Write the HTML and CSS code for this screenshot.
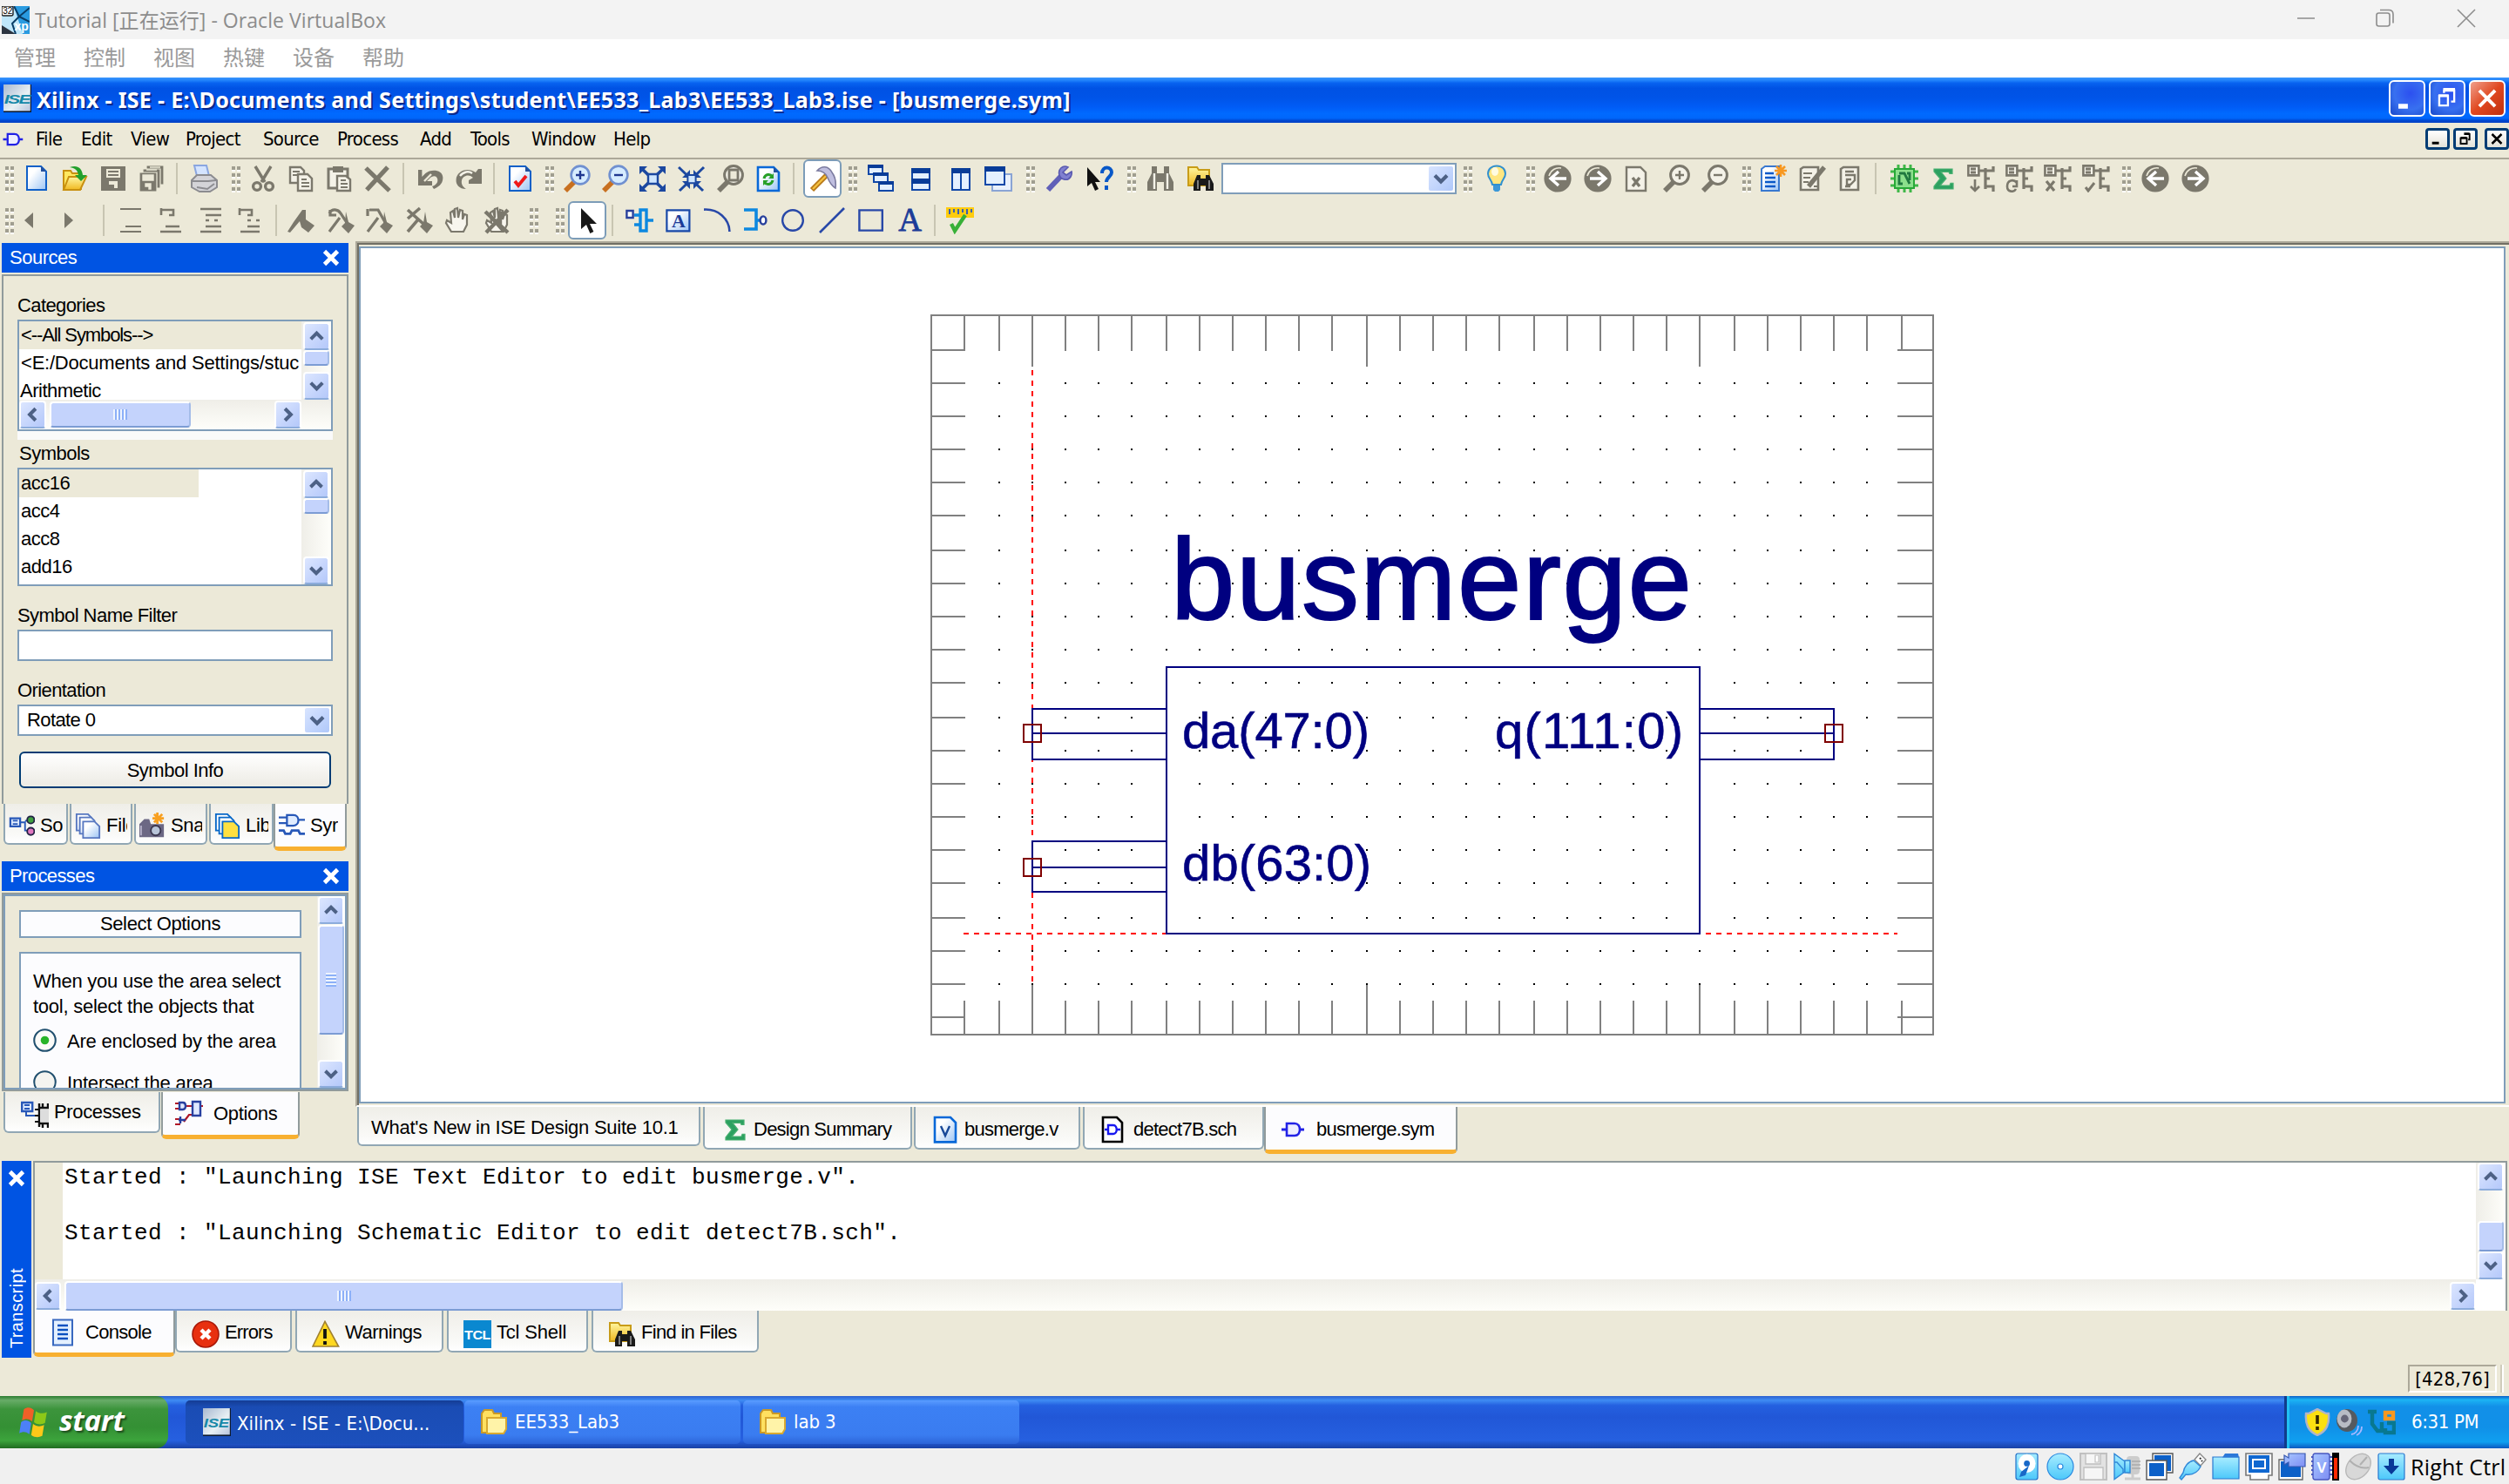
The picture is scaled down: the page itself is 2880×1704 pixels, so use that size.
FILE: index.html
```html
<!DOCTYPE html>
<html lang="zh-CN">
<head>
<meta charset="utf-8">
<title>Tutorial [正在运行] - Oracle VirtualBox</title>
<link rel="stylesheet" href="styles.css">
</head>
<body>
<svg class="defs" aria-hidden="true">
<defs>
<linearGradient id="gDoc" x1="0" y1="0" x2="1" y2="1"><stop offset=".3" stop-color="#fff"/><stop offset="1" stop-color="#9cc4f4"/></linearGradient>
<linearGradient id="gFold" x1="0" y1="0" x2="0" y2="1"><stop offset="0" stop-color="#fff6a0"/><stop offset="1" stop-color="#f0b820"/></linearGradient>
<linearGradient id="gCy" x1="0" y1="0" x2="0" y2="1"><stop offset="0" stop-color="#a8ecff"/><stop offset="1" stop-color="#4cc8fa"/></linearGradient>
<linearGradient id="gVi" x1="0" y1="0" x2="1" y2="1"><stop offset="0" stop-color="#a9c8ff"/><stop offset="1" stop-color="#7d8df4"/></linearGradient>
<linearGradient id="gIse" x1="0" y1="0" x2="1" y2="1"><stop offset="0" stop-color="#a8b8d0"/><stop offset=".6" stop-color="#e8f0f4"/><stop offset="1" stop-color="#b8c4dc"/></linearGradient>
<symbol id="up" viewBox="0 0 16 16"><path d="M4 10l4-4 4 4" fill="none" stroke="#4d6185" stroke-width="2.4"/></symbol>
<symbol id="dn" viewBox="0 0 16 16"><path d="M4 6l4 4 4-4" fill="none" stroke="#4d6185" stroke-width="2.4"/></symbol>
<symbol id="lf" viewBox="0 0 16 16"><path d="M10 4L6 8l4 4" fill="none" stroke="#4d6185" stroke-width="2.4"/></symbol>
<symbol id="rt" viewBox="0 0 16 16"><path d="M6 4l4 4-4 4" fill="none" stroke="#4d6185" stroke-width="2.4"/></symbol>
<symbol id="close" viewBox="0 0 8 8"><path d="M1 1l6 6M7 1L1 7" fill="none" stroke="#fff" stroke-width="1.9"/></symbol>
<symbol id="vm" viewBox="0 0 16 16"><path d="M0 0h16v16H0z" fill="#2a9be0"/><path d="M0 0h7l5 16H0z" fill="#bfe6fa"/><path d="M0 11l8 5H0z" fill="#2c3440"/><path d="M7 0l3 6 6-5M10 6L6 10l2 6M10 6l6 3" stroke="#0a3d66" fill="none"/><rect width="6.5" height="5.5" rx="1" fill="#fff" stroke="#222" stroke-width=".7"/><text x=".6" y="4.6" font-size="5" font-family="Liberation Sans" fill="#000">32</text><text x="7.2" y="14" font-size="7" font-weight="700" font-family="Liberation Sans" fill="#fff">xp</text></symbol>
<symbol id="ise" viewBox="0 0 16 16"><path d="M0 0h16v16H0z" fill="#0c1a30"/><path d="M0 0h15.4v15.2H0z" fill="url(#gIse)"/><text x=".4" y="11" font-size="7.4" textLength="14.6" lengthAdjust="spacingAndGlyphs" font-style="italic" font-weight="700" font-family="Liberation Sans" fill="#1688a8">ISE</text></symbol>
<symbol id="gate" viewBox="0 0 16 16"><path d="M5 4.5h4.5c2 0 3 1.6 3 3.500s-1 3.500-3 3.500H5z" fill="#eef" stroke="#2222e6" stroke-width="1.300"/><path d="M2 8h2.500M13 8h2" stroke="#2222e6" stroke-width="1.400"/></symbol>
<symbol id="new" viewBox="0 0 16 16"><path d="M2.500 1h8l3 3v10.500h-11z" fill="url(#gDoc)" stroke="#1060c8"/><path d="M10.500 1l3 3h-3z" fill="#24509c"/></symbol>
<symbol id="open" viewBox="0 0 16 16"><path d="M1.500 3.500h4l1 1.500h5v9h-10z" fill="#ffe860" stroke="#c89010"/><path d="M1.500 14.500l3-7.500h10l-3.500 7.500z" fill="url(#gFold)" stroke="#c89010"/><path d="M5 1.500c4-1.500 7 0 7.500 4.500h2.500l-3.500 3.500L8 6h2C9.500 3 8 2 5 1.500z" fill="#22a02c"/></symbol>
<symbol id="save" viewBox="0 0 16 16"><path d="M1 1h14v14H1z" fill="#7b786c"/><path d="M4 2.500h8v5H4zM5.500 9.500h5v4h-2v-2h-3z" fill="#ece9d8"/><path d="M5 4h6M5 6h6" stroke="#7b786c"/></symbol>
<symbol id="saveall" viewBox="0 0 16 16"><g fill="#7b786c" stroke="#ece9d8" stroke-width=".6"><path d="M5 .5h10v11H5z"/><path d="M3 2.500h10v11H3z"/><path d="M1 4.500h10v11H1z"/></g><path d="M3 6h6v3H3zM4.500 11h3v3h-1v-1.500h-2zM5 3h6M7 1.500h6" stroke="#ece9d8" stroke-width=".7" fill="#ece9d8"/></symbol>
<symbol id="print" viewBox="0 0 16 16"><path d="M2.500.5h7l1.500 6H4z" fill="#d4e4ff" stroke="#8aa6e0"/><path d="M1 9l3-3h8l3.500 3v4l-4 2.500h-6L1 13z" fill="#d4d4d8" stroke="#8c8c90"/><path d="M1.500 9.500h9l4.500-.5M4 13l6 1 4-3" stroke="#8c8c90" fill="none"/></symbol>
<symbol id="cut" viewBox="0 0 16 16"><g fill="none" stroke="#7b786c" stroke-width="1.700"><path d="M3.500 1l5.500 9M12.500 1L7 10"/><circle cx="4.500" cy="12.500" r="2.200"/><circle cx="11.500" cy="12.500" r="2.200"/></g></symbol>
<symbol id="copy" viewBox="0 0 16 16"><g fill="#f4f2e8" stroke="#7b786c" stroke-width="1.200"><path d="M1.500 1.500h6l2 2v7h-8z"/><path d="M6 5.500h5.500l2.500 2.500v7H6z"/></g><path d="M3 4h4M3 6h3M8 8.500h3M8 10.500h4.500M8 12.500h4.500" stroke="#7b786c"/></symbol>
<symbol id="paste" viewBox="0 0 16 16"><path d="M1.500 2.500h11v11h-11z" fill="#f4f2e8" stroke="#7b786c" stroke-width="1.500"/><path d="M4 1h6v3.500H4z" fill="#7b786c"/><path d="M6.500 6.500h5l2.500 2v6.500H6.500z" fill="#f4f2e8" stroke="#7b786c" stroke-width="1.200"/><path d="M8.500 9h3M8.500 11h4M8.500 13h4" stroke="#7b786c"/></symbol>
<symbol id="del" viewBox="0 0 16 16"><path d="M1 2l13.500 13M13.500 1.500L1.500 14.500" stroke="#7b786c" stroke-width="2.600" fill="none"/></symbol>
<symbol id="undo" viewBox="0 0 16 16"><path d="M1 3h2.200v4l2-2C8 2.500 15 2.500 15.200 7.500c0 4-3 5.500-5.200 6.500l-1-1.500c3-1 3.500-3 3-4.500-.8-2-3-1.500-4.500 0L6 9.500h3V12H1z" fill="#7b786c"/><path d="M4.500 9.500l4-4" stroke="#ece9d8" stroke-width="1.200"/></symbol>
<symbol id="redo" viewBox="0 0 16 16"><path d="M15.500 2.500V11H8V9l2.500-1.500C8 5 4.500 6.500 4 9s1 4 2.500 5C2.500 14 .5 11.500.8 8.500 1 4 7 1 12 4.500l1.500-2z" fill="#7b786c"/><path d="M3 6.500C5 4 8 3.500 10 5" stroke="#f4f2e8" stroke-width="1.200" fill="none"/></symbol>
<symbol id="chk" viewBox="0 0 16 16"><path d="M1.500 1h9l3 3v11h-12z" fill="url(#gDoc)" stroke="#1060c8"/><path d="M10.500 1l3 3h-3z" fill="#24509c"/><path d="M4.500 9.500l2 2.500L11 6.500" stroke="#f01818" stroke-width="1.900" fill="none"/></symbol>
<symbol id="mag" viewBox="0 0 16 16"><path d="M7 9.500L1.500 15" stroke="#c87020" stroke-width="2.800"/><circle cx="10" cy="6" r="5.200" fill="#d6ecff" stroke="#7090d0" stroke-width="1.300"/></symbol>
<symbol id="zin" viewBox="0 0 16 16"><use href="#mag"/><path d="M7.500 6h5M10 3.500v5" stroke="#203890" stroke-width="1.200"/></symbol>
<symbol id="zout" viewBox="0 0 16 16"><use href="#mag"/><path d="M7.500 6h5" stroke="#203890" stroke-width="1.200"/></symbol>
<symbol id="fit" viewBox="0 0 16 16"><path d="M1 2l13 12.500M14 2L1 14.500" stroke="#1c48a0" stroke-width="1.800"/><path d="M0 1h4.500L0 5.500zM15 1v4.500L10.500 1zM0 15.500V11l4.500 4.500zM15 15.500V11l-4.500 4.500z" fill="#1c48a0"/><path d="M5 5.500h5.500v5.500H5z" fill="#cfe6ff" stroke="#1c48a0" stroke-width="1.200"/></symbol>
<symbol id="shr" viewBox="0 0 16 16"><path d="M.5 1.500l14 13.500M15 1.500L1 15" stroke="#1c48a0" stroke-width="1.500"/><path d="M2.500 7.500h4.500V3zM9 3v4.500h4.500zM2.500 9.500h4.500V14zM9 14V9.500h4.500z" fill="#1c48a0"/><path d="M5.700 6h4.600v4.600H5.700z" fill="#cfe6ff" stroke="#1c48a0"/></symbol>
<symbol id="gmag" viewBox="0 0 16 16"><path d="M7 9.500L1.500 15" stroke="#7b786c" stroke-width="2.800"/><circle cx="10" cy="6" r="5.200" fill="#f4f2e8" stroke="#7b786c" stroke-width="1.500"/></symbol>
<symbol id="gsel" viewBox="0 0 16 16"><use href="#gmag"/><path d="M7.500 3h5v6h-5z" fill="#ece9d8" stroke="#7b786c" stroke-width="1.400"/></symbol>
<symbol id="gzin" viewBox="0 0 16 16"><use href="#gmag"/><path d="M7.500 6h5M10 3.500v5" stroke="#7b786c" stroke-width="1.200"/></symbol>
<symbol id="gzout" viewBox="0 0 16 16"><use href="#gmag"/><path d="M7.500 6h5" stroke="#7b786c" stroke-width="1.200"/></symbol>
<symbol id="ref" viewBox="0 0 16 16"><path d="M2 1.500h9l3 3v10.500H2z" fill="url(#gDoc)" stroke="#0868d8" stroke-width="1.300"/><path d="M11 1.500l3 3h-3z" fill="#24509c"/><path d="M5.500 8c.5-2.500 3.500-3 4.700-1.200M10.500 9c-.5 2.500-3.500 3-4.700 1.200" stroke="#28a028" stroke-width="1.500" fill="none"/><path d="M11 5v3H8zM5 12V9h3z" fill="#28a028"/></symbol>
<symbol id="ham" viewBox="0 0 16 16"><path d="M10 6L1.500 14.500" stroke="#b87818" stroke-width="3"/><path d="M9.500 6.500L2 14" stroke="#f4c040" stroke-width="1.200"/><path d="M4.500 3.500C7 .5 11 .5 13 4.500c1.500 2 2.500 5 2 9-2.500-1.500-3.500-3.500-4.500-6C9.500 5 7.500 3.500 4.500 3.500z" fill="#c0bfe0" stroke="#7c7ca0" stroke-width=".8"/></symbol>
<symbol id="w1" viewBox="0 0 16 16"><path d="M.5.500h8v5h-8z" fill="#e4f0ff" stroke="#1048a8"/><path d="M0 0h9v2H0z" fill="#083c98"/></symbol>
<symbol id="casc" viewBox="0 0 16 16"><use href="#w1" width="16" height="16" x="1" y="0"/><use href="#w1" width="16" height="16" x="4" y="4.500"/><use href="#w1" width="16" height="16" x="7" y="9.500"/></symbol>
<symbol id="th" viewBox="0 0 16 16"><path d="M3.500 2.500h10v12h-10z" fill="#e4f0ff" stroke="#1048a8"/><path d="M3 2h11v3H3zM3 8h11v3H3z" fill="#083c98"/></symbol>
<symbol id="tv" viewBox="0 0 16 16"><path d="M3.500 2.500h10v12h-10zM8.500 2v12" fill="#e4f0ff" stroke="#1048a8"/><path d="M3 2h11v3H3z" fill="#083c98"/></symbol>
<symbol id="win" viewBox="0 0 16 16"><path d="M4.500 5.500h11v9.500h-11z" fill="#e8f0fc" stroke="#8aa4d4"/><path d="M.5 1.500h11v10H.5z" fill="#e4f0ff" stroke="#1048a8"/><path d="M0 1h12v3H0z" fill="#083c98"/></symbol>
<symbol id="wr" viewBox="0 0 16 16"><path d="M1.500 14.500l8-8.500" stroke="#6060b8" stroke-width="3"/><path d="M13 1.500c-3-1.500-6 1-5 4.500 1 3 5 3.500 6.500 1 .7-1.200.8-2 .5-3l-3 2-2-1.500z" fill="#8080d0" stroke="#5858b0" stroke-width=".8"/></symbol>
<symbol id="hlp" viewBox="0 0 16 16"><path d="M1 1.500v11l2.500-2 2 4.500 2-1-2-4h3z" fill="#111"/><path d="M9.500 5c0-4.500 5.500-4 5.500-.5 0 2.500-3 2.500-3 5.500M12 12v2.500" stroke="#0858c8" stroke-width="2" fill="none"/></symbol>
<symbol id="bin" viewBox="0 0 16 16"><path d="M3 1h3v4h4V1h3v4l2.500 5v5H10v-5H6v5H.5v-5L3 5z" fill="#7b786c"/><path d="M4.500 5v9M12 5v9" stroke="#f4f2e8" stroke-width="1.200"/></symbol>
<symbol id="fbin" viewBox="0 0 16 16"><path d="M1 1.500h5l1 1.500h6v9H1z" fill="url(#gFold)" stroke="#c89c18"/><path d="M6 6h2v2h3V6h2l2.500 5v4H11v-3H8v3H4v-4z" fill="#1a1a1a"/><path d="M6.500 9v5M13 9v5" stroke="#999" stroke-width=".8"/></symbol>
<symbol id="bulb" viewBox="0 0 16 16"><path d="M8 .7c3 0 5 2 5 4.600 0 2.500-2 3.200-2.500 6.200h-5C5 8.500 3 7.800 3 5.300 3 2.700 5 .7 8 .7z" fill="#ffe680" stroke="#3090d0"/><path d="M6 12h4v2.500l-1 1H7l-1-1z" fill="#3c98d8"/><ellipse cx="7" cy="4" rx="2" ry="2.500" fill="#fffbe0"/></symbol>
<symbol id="back" viewBox="0 0 16 16"><circle cx="8" cy="8" r="7.800" fill="#7b786c"/><path d="M3 6.500C4 3 7 1.500 10 2" stroke="#ece9d8" fill="none" stroke-width=".8"/><path d="M8.500 4L4 8l4.500 4M4.500 8H13" fill="none" stroke="#fff" stroke-width="1.700"/></symbol>
<symbol id="fwd" viewBox="0 0 16 16"><circle cx="8" cy="8" r="7.800" fill="#7b786c"/><path d="M2 6.500C3 3 6 1.500 9 2" stroke="#ece9d8" fill="none" stroke-width=".8"/><path d="M8 4l4.500 4L8 12M12 8H3.500" fill="none" stroke="#fff" stroke-width="1.700"/></symbol>
<symbol id="docx" viewBox="0 0 16 16"><path d="M2.500 1.500h8l3 3v10.500h-11z" fill="#f4f2e8" stroke="#7b786c" stroke-width="1.200"/><path d="M6 7.500l4 5M10 7.500l-4 5" stroke="#7b786c" stroke-width="1.700"/></symbol>
<symbol id="nsrc" viewBox="0 0 16 16"><path d="M1 2.500L3 1h8v14H1z" fill="url(#gDoc)" stroke="#3878d0"/><path d="M3 5h5M3 7.500h6M3 10h6M3 12.500h6" stroke="#0858c8" stroke-width="1.200"/><path d="M12 0v7M8.500 3.500h7M9.500 1l5 5M14.500 1l-5 5" stroke="#f89820" stroke-width="1.300"/></symbol>
<symbol id="edit" viewBox="0 0 16 16"><path d="M1.500 2.500L3 1.500h8.500v13h-10z" fill="#f4f2e8" stroke="#7b786c" stroke-width="1.300"/><path d="M3 5h5M3 7.500h4M3 10h3M9 12.500h2" stroke="#7b786c"/><path d="M15 1.500L6 12.500" stroke="#7b786c" stroke-width="2.600"/></symbol>
<symbol id="dq" viewBox="0 0 16 16"><path d="M2.500 2.500L4 1.500h8.500v13h-10z" fill="#f4f2e8" stroke="#7b786c" stroke-width="1.300"/><path d="M5 4h5M5 6h5.500v3L8 11.500H6V8.500h2.500M5 12.500h3" stroke="#7b786c" stroke-width="1.200" fill="none"/></symbol>
<symbol id="chip" viewBox="0 0 16 16"><path d="M4.500 0v16M8 0v16M11.500 0v16M0 4h16M0 8h16M0 12h16" stroke="#40b848" stroke-width="1.500"/><path d="M2.500 2.500h11v11h-11z" fill="#8ce08c" stroke="#28a838"/><path d="M5 5h3l3 6M5 6v5l2 0M9.500 5H11v4" stroke="#207840" stroke-width="1.400" fill="none"/></symbol>
<symbol id="sig" viewBox="0 0 16 16"><path d="M3 3.500V2.500h10.500v2.700H12l-.5-1H7l3 3.800-3.500 4H12l.5-1.300H14v3.300H3V12.500l3.500-4.500L3 4z" fill="#2ca060" stroke="#48b070" stroke-width=".6"/></symbol>
<symbol id="lad" viewBox="0 0 16 16"><path d="M.7.700h6v5.500h-6z" fill="#f4f2e8" stroke="#7b786c" stroke-width="1.300"/><path d="M2 2.500h3M2 4.500h3M7 3.500h3M10.500 2v12M10 3.500h5V1M10 8h3M10 12.500h5v3" stroke="#7b786c" stroke-width="1.600" fill="none"/></symbol>
<symbol id="la" viewBox="0 0 16 16"><use href="#lad"/><path d="M4.500 8.500V15M2 12.500l2.500 2.500L7 12.500" stroke="#7b786c" stroke-width="1.300" fill="none"/></symbol>
<symbol id="lb" viewBox="0 0 16 16"><use href="#lad"/><path d="M6.500 10.500C4.500 8 1 9 1 12.500s4 3.500 5 1.500M4 12.500h2.500V9" stroke="#7b786c" stroke-width="1.300" fill="none"/></symbol>
<symbol id="lc" viewBox="0 0 16 16"><use href="#lad"/><path d="M1.500 9.500l4.500 5.500M6 9.500L1.500 15" stroke="#7b786c" stroke-width="1.600"/></symbol>
<symbol id="ld" viewBox="0 0 16 16"><use href="#lad"/><path d="M2 13l1.500 2L7 10.500" stroke="#7b786c" stroke-width="1.500" fill="none"/></symbol>
<symbol id="al" viewBox="0 0 16 16"><path d="M10 3.500v9L5 8z" fill="#7b786c"/></symbol>
<symbol id="ar" viewBox="0 0 16 16"><path d="M5 3.500v9L10 8z" fill="#7b786c"/></symbol>
<symbol id="l1" viewBox="0 0 16 16"><path d="M2 1.500h12M5 11.500h9M2 14.500h12" stroke="#7b786c" stroke-width="1.100"/></symbol>
<symbol id="l2" viewBox="0 0 16 16"><path d="M2.500 1v4M2.500 2h7v3H7M5 11.500h8M2 14.500h12" stroke="#7b786c" stroke-width="1.300" fill="none"/></symbol>
<symbol id="l3" viewBox="0 0 16 16"><path d="M2 1.500h12M5 5h9M5 8h2M10 8h2M5 11.500h9M2 14.500h12" stroke="#7b786c" stroke-width="1.200"/></symbol>
<symbol id="l4" viewBox="0 0 16 16"><path d="M2.500 1v4M2.500 2h7v3H7M7 8h2M12 8h2M7 11.500h7M3 14.500h11" stroke="#7b786c" stroke-width="1.300" fill="none"/></symbol>
<symbol id="p1" viewBox="0 0 16 16"><path d="M0 14.500L3.500 9 8.500 2h2v5.500l5 3.500-3.500 4-4-3-1-3.500L1.500 15z" fill="#7b786c"/></symbol>
<symbol id="p2" viewBox="0 0 16 16"><path d="M1 4C2.500 1 6 1.500 7.500 4l4 6M5 5H1.500V2M1 14.500l6-8" stroke="#7b786c" stroke-width="1.600" fill="none"/><path d="M10.500 3l1.500 6 3.500 2-3.500 4.500-4-4 2-2z" fill="#7b786c"/></symbol>
<symbol id="p3" viewBox="0 0 16 16"><path d="M1 1.500v4M2 2h5l4.500 8M1 14.500l6-8" stroke="#7b786c" stroke-width="1.600" fill="none"/><path d="M10.500 3l1.500 6 3.500 2-3.500 4.500-4-4 2-2z" fill="#7b786c"/></symbol>
<symbol id="p4" viewBox="0 0 16 16"><path d="M1 2l9 8M8 1L1 7M1 14.500l6-7" stroke="#7b786c" stroke-width="1.800" fill="none"/><path d="M11 3l1 6 3.500 2-3.500 4.500-4-4 2-2z" fill="#7b786c"/></symbol>
<symbol id="hand" viewBox="0 0 16 16"><path d="M5 14.500L2 9.500 2.500 8 5 9.500 4.500 3.500 6 2.500l1 4V1.500l1.500-.5.5 5.500 1-4.500 1.500.5v5l1-3 1.500.5v5.500l-2 4z" fill="#f8f6ee" stroke="#7b786c" stroke-width="1.100"/></symbol>
<symbol id="hx" viewBox="0 0 16 16"><use href="#hand"/><path d="M1.500 3l13 12M14.500 2L2 15M4 5l8 9M10 3v8" stroke="#7b786c" stroke-width="2.200"/></symbol>
<symbol id="cur" viewBox="0 0 16 16"><path d="M4 1v12l3-2.500 2.200 5 2-1-2.200-4.500H13z" fill="#181818"/></symbol>
<symbol id="sym" viewBox="0 0 16 16"><path d="M.7 2.500h3.600v4H.7z" fill="#fff" stroke="#28409c" stroke-width="1.200"/><path d="M8.500 2h3.500v12H8.500zM5 5h3M5 10.500h3M12 8h4" fill="#ece9d8" stroke="#0c88e0" stroke-width="1.700"/></symbol>
<symbol id="abox" viewBox="0 0 16 16"><path d="M1.700 2.200h13v12h-13z" fill="url(#gDoc)" stroke="#1848a8" stroke-width="1.100"/><text x="8.200" y="12" text-anchor="middle" font-family="Liberation Serif" font-weight="700" font-size="11" fill="#1c3c98">A</text></symbol>
<symbol id="arc" viewBox="0 0 16 16"><path d="M0 1.800c8-.5 14.500 5 14.700 12.700" stroke="#2848a8" stroke-width="1.300" fill="none"/></symbol>
<symbol id="bus" viewBox="0 0 16 16"><path d="M1 2h7v11H1M8 8h3" stroke="#0c88e0" stroke-width="1.800" fill="none"/><ellipse cx="12" cy="8" rx="1.700" ry="2.300" fill="#fff" stroke="#28409c" stroke-width="1.200"/></symbol>
<symbol id="cir" viewBox="0 0 16 16"><circle cx="8" cy="8" r="5.900" fill="none" stroke="#2848a8" stroke-width="1.200"/></symbol>
<symbol id="lin" viewBox="0 0 16 16"><path d="M.5 15L14.500 1" stroke="#2848a8" stroke-width="1.300"/></symbol>
<symbol id="rec" viewBox="0 0 16 16"><path d="M1.200 2.200h13.200v11.600H1.200z" fill="none" stroke="#2848a8" stroke-width="1.200"/></symbol>
<symbol id="txa" viewBox="0 0 16 16"><text x="8" y="14" text-anchor="middle" font-family="Liberation Serif" font-size="18.500" fill="#1c3c98" stroke="#1c3c98" stroke-width=".4">A</text></symbol>
<symbol id="rul" viewBox="0 0 16 16"><path d="M0 .5h16v6H0z" fill="#ffcc10"/><path d="M2 1.500v3M4.500 1.500v2M7 1.500v3M9.500 1.500v2M12 1.500v3M14.500 1.500v2" stroke="#3c60b0"/><path d="M3 10l2 4 6-9" stroke="#38b038" stroke-width="2.200" fill="none"/></symbol>
<symbol id="so" viewBox="0 0 16 16"><path d="M1 3.500h6v5H1z" fill="#e0ecff" stroke="#2858b8" stroke-width="1.200"/><path d="M2.500 5h3M2.500 7h3M7 6h3v5h2M10 5h2" stroke="#2858b8" fill="none"/><circle cx="13.500" cy="4.500" r="2.200" fill="#40a040" stroke="#224"/><circle cx="13.500" cy="11.500" r="2.200" fill="#e078c0" stroke="#224"/></symbol>
<symbol id="fil" viewBox="0 0 16 16"><g fill="url(#gDoc)" stroke="#5878c0"><path d="M1 1h7l2 2v8H1z"/><path d="M3 3h7l2 2v8H3z"/><path d="M5 5.500h7l3 3v7H5z"/></g></symbol>
<symbol id="lib" viewBox="0 0 16 16"><g fill="#fff" stroke="#0868c8"><path d="M1 1h7l2 2v8H1z"/><path d="M3 3h7l2 2v8H3z"/><path d="M5 5.500h7l3 3v7H5z" fill="#ffe040"/></g></symbol>
<symbol id="sna" viewBox="0 0 16 16"><path d="M11 0v7M8 3.500h7M9 1l5 5M14 1L9 6" stroke="#f8a020" stroke-width="1.500"/><path d="M0 7l3-3h3l1 3h8v8H0z" fill="#6c6884"/><circle cx="10" cy="11" r="3" fill="#b8c4d8" stroke="#3c3850"/><path d="M1 8v6" stroke="#b8b4cc"/></symbol>
<symbol id="syr" viewBox="0 0 16 16"><path d="M0 3h5M0 6.500h5M5 1.500h4c4 0 4 6.500 0 6.500H5zM12 4.500h4" fill="#e0ecff" stroke="#2858b8" stroke-width="1.200"/><path d="M0 11h3l1 2h3l1-2h4l1 2h3" fill="none" stroke="#2858b8" stroke-width="1.500"/></symbol>
<symbol id="prc" viewBox="0 0 16 16"><path d="M.6 1h6v5h-6z" fill="#e0ecff" stroke="#2858b8" stroke-width="1.200"/><path d="M2 2.500h3M2 4.500h3M3 6v2.500h5" stroke="#2858b8" fill="none"/><path d="M8 5h2M8 8.500h2M8 12h2" stroke="#111"/><path d="M10.500 1.500v13.500M15.500 1.500v2.500h-5M15.500 15.500v-2.500h-5M12.500 1.500v2M12.500 15.500v-2" stroke="#111" stroke-width="1.200" fill="none"/><path d="M11 5h5v7h-5z" fill="#ddd"/></symbol>
<symbol id="opt" viewBox="0 0 16 16"><path d="M0 2h3M0 5h3M6 3.500h3.500M13 3.500h3M0 11h3M5 12.500l3-4h2M0 14h3" stroke="#b01828" stroke-width="1.100" fill="none"/><path d="M2.500 1.500h2c2 0 2 4 0 4h-2zM10 1h4.500v8H10zM3 9.500v4M2 11.500h4" fill="#e0e8ff" stroke="#2840a0" stroke-width="1.200"/></symbol>
<symbol id="vdoc" viewBox="0 0 16 16"><path d="M2 1h9l3 3v11.200H2z" fill="url(#gDoc)" stroke="#0868d8" stroke-width="1.300"/><path d="M5.500 6l2.500 5.500L10.500 6" stroke="#184898" fill="none" stroke-width="1.200"/></symbol>
<symbol id="sdoc" viewBox="0 0 16 16"><path d="M2.500 1h8l3 3v11h-11z" fill="#fff" stroke="#000" stroke-width="1.300"/><path d="M5.500 5.500h3c2.500 0 2.500 5 0 5h-3zM3.500 8h2M10.500 8h2" fill="none" stroke="#1818f0" stroke-width="1.200"/></symbol>
<symbol id="con" viewBox="0 0 16 16"><path d="M2.500.800h11v14.500h-11z" fill="#e4f0ff" stroke="#3868c0"/><path d="M5 4h6M5 6.500h6M5 9h6M5 11.500h6" stroke="#0850c0" stroke-width="1.200"/></symbol>
<symbol id="err" viewBox="0 0 16 16"><circle cx="8" cy="8" r="7.500" fill="#e83010" stroke="#a81808" stroke-width=".8"/><path d="M5.500 5.500l5 5M10.500 5.500l-5 5" stroke="#fff" stroke-width="2.200"/></symbol>
<symbol id="warn" viewBox="0 0 16 16"><path d="M7.500.7L15.300 15H.5z" fill="#ffd820" stroke="#a08030" stroke-width=".8"/><path d="M7.500 5v5.500M7.500 12v2" stroke="#111" stroke-width="1.900"/></symbol>
<symbol id="tcl" viewBox="0 0 16 16"><path d="M0 0h16v16H0z" fill="#0a88d0"/><text x=".5" y="11" font-size="7" textLength="15" lengthAdjust="spacingAndGlyphs" font-family="Liberation Sans" font-weight="700" fill="#fff">TCL</text></symbol>
<symbol id="fold" viewBox="0 0 16 16"><path d="M1 3l1.500-2H7l1 2h4v3L5 14H1z" fill="#ffe060" stroke="#c89828"/><path d="M4 14.500V5.500h11V12l-1.500 2.500z" fill="#fff3a8" stroke="#d8a830"/></symbol>
<symbol id="flag" viewBox="0 0 36 36"><path d="M7 4c4-3 8-2 11 1l-2 12c-4-3-7-3-11-1z" fill="#f06028"/><path d="M20 6c4 3 8 3 12 1l-2 12c-4 2-8 2-12-1z" fill="#8cc818"/><path d="M4 18c4-3 8-2 11 1l-2 12c-4-3-7-3-11-1z" fill="#4c80f8"/><path d="M17 20c4 3 8 3 12 1l-2 12c-4 2-8 2-12-1z" fill="#fcc818"/></symbol>
<symbol id="shield" viewBox="0 0 16 16"><path d="M8 .5l5 2.500h1.500c.5 6-1 10-6.500 12.500C2.500 13 1 9 1.500 3H3z" fill="#fce010" stroke="#b0b4c8" stroke-width="1.200"/><path d="M8 4v5M8 10.500v2" stroke="#332800" stroke-width="1.800"/></symbol>
<symbol id="spk" viewBox="0 0 16 16"><ellipse cx="6.500" cy="7" rx="6" ry="6.500" fill="#555a60"/><ellipse cx="5" cy="6" rx="4.200" ry="5.200" fill="#b8bcc4"/><circle cx="5.200" cy="6" r="2.200" fill="#667"/><path d="M9 15c2 0 4-2 4-5M12 15.500c2-1 3-3 3-5" stroke="#a8b8ff" stroke-width=".9" fill="none"/></symbol>
<symbol id="v2" viewBox="0 0 16 16"><path d="M0 2h5M2.500 2v7l3 4H8V8" stroke="#087890" stroke-width="2.200" fill="none"/><path d="M10 2.500h4.500V6H10z" fill="none" stroke="#f89820" stroke-width="2.200"/><path d="M16 8.500h-5M15 8.500v5.500h-5v-2.500" fill="none" stroke="#087890" stroke-width="2.200"/></symbol>
<symbol id="h1" viewBox="0 0 16 16"><rect x="1.500" y=".5" width="12.500" height="15" rx="1.200" fill="url(#gCy)" stroke="#2070c8" stroke-width=".6"/><ellipse cx="7.800" cy="6.200" rx="5" ry="5.300" fill="#fff"/><circle cx="7.800" cy="6.200" r="1.700" fill="#1868c8"/><path d="M9 7.500L7 13l-3.500 1 1-3z" fill="#1868c8"/></symbol>
<symbol id="h2" viewBox="0 0 16 16"><circle cx="8" cy="8" r="7.500" fill="url(#gCy)" stroke="#2888e0" stroke-width=".6"/><circle cx="8" cy="8" r="1.500" fill="#fff" stroke="#2888e0" stroke-width=".6"/></symbol>
<symbol id="h3" viewBox="0 0 16 16"><path d="M.5.500h15v15H.5z" fill="#e2e2e2" stroke="#c0c0c0"/><path d="M3.500.500h8.500v6H3.500zM2.500 8.500h11v7h-11z" fill="#f6f6f6" stroke="#c0c0c0" stroke-width=".7"/><path d="M9 1.500h2v4H9z" fill="#fff" stroke="#c0c0c0" stroke-width=".6"/></symbol>
<symbol id="h4" viewBox="0 0 16 16"><rect x="8" y="2" width="7.500" height="10.500" rx="2" fill="#ccc"/><path d="M11 5h5M11 7h5M11 9h5" stroke="#aaa" stroke-width=".7"/><path d="M7 15h9M11.500 12v3" stroke="#ccc" stroke-width="1.500"/><path d="M1 5.500h1.500L6 9.500V12M1 .700L7 5v6l-6 4.300z" fill="url(#gCy)" stroke="#3088d8" stroke-width=".7"/><path d="M7 4.500h3v7H7z" fill="url(#gCy)" stroke="#3088d8" stroke-width=".7"/></symbol>
<symbol id="h5" viewBox="0 0 16 16"><path d="M4 .500h11.500v11H4z" fill="#fff" stroke="#555" stroke-width=".7"/><path d="M5 1.500h9.500v9H5z" fill="#0c60c8"/><path d="M.5 4.500H12v11H.5z" fill="#fff" stroke="#555" stroke-width=".7"/><path d="M2 6h8.500v7.500H2z" fill="#0c60c8"/></symbol>
<symbol id="h6" viewBox="0 0 16 16"><path d="M9 4l3-3.500 3.500 3.500-3 3.500z" fill="#fff" stroke="#888" stroke-width=".7"/><path d="M8.500 4.500l4 3.500C11 11 8 13 4 12.500l-2.500 3-1-1 2-3C3 8 5.500 5 8.500 4.500z" fill="url(#gCy)" stroke="#3088d8" stroke-width=".7"/><path d="M12 3l.7.7M13 4.500l.5.5" stroke="#333"/></symbol>
<symbol id="h7" viewBox="0 0 16 16"><path d="M.5 2.500h15v12.500H.5z" fill="url(#gCy)" stroke="#2878d0" stroke-width=".6"/><path d="M6 2.800L7.500.500H15l.5 2.300z" fill="#2c78d8"/></symbol>
<symbol id="h8" viewBox="0 0 16 16"><path d="M.5.500h15v12.500h-2v2.500H3V13H.5z" fill="#fff" stroke="#777" stroke-width=".8"/><path d="M2 1.500h12v10H2z" fill="#1068d0"/><path d="M4.500 4h7v5h-7z" fill="none" stroke="#fff"/></symbol>
<symbol id="h9" viewBox="0 0 16 16"><path d="M.5 4h13.500v11.500H.5z" fill="#fff" stroke="#666" stroke-width=".7"/><path d="M1.500 5h11.500v9H1.500z" fill="#0c60c8"/><path d="M6 .5h9.500V8H6V5.500L3.500 7V1.500L6 3z" fill="url(#gVi)" stroke="#3858b0" stroke-width=".6"/></symbol>
<symbol id="h10" viewBox="0 0 16 16"><path d="M0 2.500h12M0 5h12M0 7.500h12M0 10h12M0 12.500h12" stroke="#4858c0" stroke-width=".9"/><rect x="1" y=".5" width="9.500" height="15" rx="1.200" fill="url(#gVi)" stroke="#4858c0" stroke-width=".7"/><text x="5.700" y="11.500" text-anchor="middle" font-size="8.500" font-weight="700" font-family="Liberation Sans" fill="#fff">V</text><path d="M12 0h4v16h-4z"/><path d="M13 3h2v12h-2z" fill="#ff2800"/></symbol>
<symbol id="h11" viewBox="0 0 16 16"><ellipse cx="8" cy="8" rx="6" ry="8.300" transform="rotate(42 8 8)" fill="#d8d8d8" stroke="#b8b8b8" stroke-width=".7"/><path d="M3 4.500c3 3 7 5 11 4M9 7l4-4.500" stroke="#b0b0b0" fill="none"/></symbol>
<symbol id="h12" viewBox="0 0 16 16"><rect x=".5" y=".5" width="15" height="15" rx="1" fill="url(#gCy)" stroke="#2878d0" stroke-width=".6"/><path d="M6.500 3.500h3v4h3L8 12.500 3.500 7.500h3z" fill="#083898"/></symbol>
</defs>
</svg>

<header class="host-title">
  <svg class="host-logo" preserveAspectRatio="none"><use href="#vm"/></svg>
  <span class="host-name">Tutorial [正在运行] - Oracle VirtualBox</span>
  <svg class="host-ctl" viewBox="0 0 210 24"><g fill="none" stroke="#8d8d8d" stroke-width="1.600"><path d="M0 12h20M184 2l20 20M204 2l-20 20"/><rect x="91" y="6" width="15" height="15" rx="2.500"/><path d="M95 2.500h10q5 0 5 5v10"/></g></svg>
</header>
<nav class="host-menu"><span>管理</span><span>控制</span><span>视图</span><span>热键</span><span>设备</span><span>帮助</span></nav>

<header class="xp-title">
  <svg class="ic"><use href="#ise"/></svg>
  <h1>Xilinx - ISE - E:\Documents and Settings\student\EE533_Lab3\EE533_Lab3.ise - [busmerge.sym]</h1>
  <div class="xp-ctl">
    <svg viewBox="0 0 21 21"><path d="M5 14h6v3H5z" fill="#fff"/></svg>
    <svg viewBox="0 0 21 21"><path d="M8.500 7V5.500h6.500v7h-2M8 4.500h7.500" stroke="#fff" stroke-width="1.300" fill="none"/><path d="M5.500 9h5.500v6H5.500zM5 8.500h6.500" stroke="#fff" stroke-width="1.300" fill="none"/></svg>
    <svg class="red" viewBox="0 0 21 21"><path d="M5.500 5.500l10 10M15.500 5.500l-10 10" stroke="#fff" stroke-width="2.200"/></svg>
  </div>
</header>

<nav class="menubar">
  <svg class="ic"><use href="#gate"/></svg>
  <div class="menus"><span>File</span><span>Edit</span><span>View</span><span>Project</span><span>Source</span><span>Process</span><span>Add</span><span>Tools</span><span>Window</span><span>Help</span></div>
  <div class="mdi-ctl">
    <svg viewBox="0 0 14 12"><path d="M3 8h5v2H3z"/></svg>
    <svg viewBox="0 0 14 12"><path d="M6 2.500h4v4H9M3.500 5.500h4.500v4H3.500zM6 2h4M3.500 5h4.500" stroke="#000" fill="none" stroke-width="1.200"/></svg>
    <svg viewBox="0 0 14 12"><path d="M3.500 2.500l7 7M10.500 2.500l-7 7" stroke="#000" stroke-width="1.600"/></svg>
  </div>
</nav>

<section class="tools">
  <div class="bar one">
    <i class="grip"></i><svg class="ic"><use href="#new"/></svg><svg class="ic"><use href="#open"/></svg><svg class="ic"><use href="#save"/></svg><svg class="ic"><use href="#saveall"/></svg><i class="sep"></i><svg class="ic"><use href="#print"/></svg>
    <i class="grip"></i><svg class="ic"><use href="#cut"/></svg><svg class="ic"><use href="#copy"/></svg><svg class="ic"><use href="#paste"/></svg><svg class="ic"><use href="#del"/></svg><i class="sep"></i><svg class="ic"><use href="#undo"/></svg><svg class="ic"><use href="#redo"/></svg><i class="sep"></i><svg class="ic"><use href="#chk"/></svg>
    <i class="grip"></i><svg class="ic"><use href="#zin"/></svg><svg class="ic"><use href="#zout"/></svg><svg class="ic"><use href="#fit"/></svg><svg class="ic"><use href="#shr"/></svg><svg class="ic"><use href="#gsel"/></svg><svg class="ic"><use href="#ref"/></svg><i class="sep"></i><span class="pressed"><svg class="ic"><use href="#ham"/></svg></span>
    <i class="grip"></i><svg class="ic"><use href="#casc"/></svg><svg class="ic"><use href="#th"/></svg><svg class="ic"><use href="#tv"/></svg><svg class="ic"><use href="#win"/></svg>
    <i class="grip"></i><svg class="ic"><use href="#wr"/></svg><svg class="ic"><use href="#hlp"/></svg>
    <i class="grip"></i><svg class="ic"><use href="#bin"/></svg><svg class="ic"><use href="#fbin"/></svg><span class="combo find"><svg class="drop"><use href="#dn"/></svg></span>
    <i class="grip"></i><svg class="ic"><use href="#bulb"/></svg>
    <i class="grip"></i><svg class="ic"><use href="#back"/></svg><svg class="ic"><use href="#fwd"/></svg><svg class="ic"><use href="#docx"/></svg><svg class="ic"><use href="#gzin"/></svg><svg class="ic"><use href="#gzout"/></svg>
    <i class="grip"></i><svg class="ic"><use href="#nsrc"/></svg><svg class="ic"><use href="#edit"/></svg><svg class="ic"><use href="#dq"/></svg><i class="sep"></i><svg class="ic"><use href="#chip"/></svg><svg class="ic"><use href="#sig"/></svg><svg class="ic"><use href="#la"/></svg><svg class="ic"><use href="#lb"/></svg><svg class="ic"><use href="#lc"/></svg><svg class="ic"><use href="#ld"/></svg>
    <i class="grip"></i><svg class="ic"><use href="#back"/></svg><svg class="ic"><use href="#fwd"/></svg>
  </div>
  <div class="bar two">
    <i class="grip"></i><svg class="ic"><use href="#al"/></svg><svg class="ic"><use href="#ar"/></svg><i class="sep"></i><svg class="ic"><use href="#l1"/></svg><svg class="ic"><use href="#l2"/></svg><svg class="ic"><use href="#l3"/></svg><svg class="ic"><use href="#l4"/></svg><i class="sep"></i><svg class="ic"><use href="#p1"/></svg><svg class="ic"><use href="#p2"/></svg><svg class="ic"><use href="#p3"/></svg><svg class="ic"><use href="#p4"/></svg><svg class="ic"><use href="#hand"/></svg><svg class="ic"><use href="#hx"/></svg>
    <i class="grip"></i><i class="grip"></i><span class="pressed"><svg class="ic"><use href="#cur"/></svg></span><i class="sep"></i><svg class="ic"><use href="#sym"/></svg><svg class="ic"><use href="#abox"/></svg><svg class="ic"><use href="#arc"/></svg><svg class="ic"><use href="#bus"/></svg><svg class="ic"><use href="#cir"/></svg><svg class="ic"><use href="#lin"/></svg><svg class="ic"><use href="#rec"/></svg><svg class="ic"><use href="#txa"/></svg><i class="sep"></i><svg class="ic"><use href="#rul"/></svg>
  </div>
</section>

<main class="work">
  <aside class="dock">
    <div class="dock-head sources-head"><span>Sources</span><svg class="x"><use href="#close"/></svg></div>
    <div class="sources">
      <div class="lbl cat">Categories</div>
      <div class="list cats">
        <ul><li class="sel all">&lt;--All Symbols--&gt;</li><li class="path">&lt;E:/Documents and Settings/stuc</li><li class="arith">Arithmetic</li></ul>
        <div class="vs"><svg class="sb"><use href="#up"/></svg><i class="thumb"></i><svg class="sb last"><use href="#dn"/></svg></div>
        <div class="hs"><svg class="sb"><use href="#lf"/></svg><i class="thumb ridged"></i><svg class="sb last"><use href="#rt"/></svg></div>
      </div>
      <div class="strip"></div>
      <div class="lbl sy">Symbols</div>
      <div class="list syms">
        <ul><li class="sel half">acc16</li><li>acc4</li><li>acc8</li><li>add16</li></ul>
        <div class="vs"><svg class="sb"><use href="#up"/></svg><i class="thumb"></i><svg class="sb last"><use href="#dn"/></svg></div>
      </div>
      <div class="lbl filt">Symbol Name Filter</div>
      <div class="field"></div>
      <div class="lbl ori">Orientation</div>
      <div class="combo orient"><span>Rotate 0</span><svg class="drop"><use href="#dn"/></svg></div>
      <button class="info">Symbol Info</button>
    </div>
    <div class="tabs stabs">
      <div class="tab"><svg class="ic"><use href="#so"/></svg><span>So</span></div>
      <div class="tab"><svg class="ic"><use href="#fil"/></svg><span>File</span></div>
      <div class="tab"><svg class="ic"><use href="#sna"/></svg><span>Sna</span></div>
      <div class="tab"><svg class="ic"><use href="#lib"/></svg><span>Lib</span></div>
      <div class="tab on"><svg class="ic"><use href="#syr"/></svg><span>Syr</span></div>
    </div>
    <div class="dock-head proc-head"><span>Processes</span><svg class="x"><use href="#close"/></svg></div>
    <div class="proc">
      <div class="proc-body">
        <div class="selopt">Select Options</div>
        <div class="group">
          <p>When you use the area select</p><p>tool, select the objects that</p>
          <div class="radio"><svg viewBox="0 0 13 13"><circle cx="6.500" cy="6.500" r="5.900" fill="#fbfbf8" stroke="#21506f"/><circle cx="6.500" cy="6.500" r="2.300" fill="#28b428"/></svg><span>Are enclosed by the area</span></div>
          <div class="radio second"><svg viewBox="0 0 13 13"><circle cx="6.500" cy="6.500" r="5.900" fill="#f4f4f0" stroke="#21506f"/></svg><span>Intersect the area</span></div>
        </div>
      </div>
      <div class="vs"><svg class="sb"><use href="#up"/></svg><i class="thumb ridged"></i><svg class="sb last"><use href="#dn"/></svg></div>
    </div>
    <div class="tabs ptabs">
      <div class="tab"><svg class="ic"><use href="#prc"/></svg><span>Processes</span></div>
      <div class="tab on"><svg class="ic"><use href="#opt"/></svg><span>Options</span></div>
    </div>
  </aside>

  <section class="editor">
    <div class="frame">
      <svg class="sheet" viewBox="1066 359 1156 832" shape-rendering="crispEdges">
        <rect x="1069" y="362" width="1150" height="826" fill="none" stroke="#808080" stroke-width="2"/>
        <path stroke="#808080" stroke-width="2" d="M1107 362v41M1147 362v41M1185 362v59M1223 362v41M1261 362v41M1299 362v41M1339 362v41M1377 362v41M1415 362v41M1453 362v41M1491 362v41M1529 362v41M1569 362v59M1607 362v41M1645 362v41M1683 362v41M1721 362v41M1761 362v41M1799 362v41M1837 362v41M1875 362v41M1913 362v41M1951 362v59M1991 362v41M2029 362v41M2067 362v41M2105 362v41M2143 362v41M2183 362v41"/>
        <path stroke="#808080" stroke-width="2" d="M1107 1149v39M1147 1149v39M1185 1129v59M1223 1149v39M1261 1149v39M1299 1149v39M1339 1149v39M1377 1149v39M1415 1149v39M1453 1149v39M1491 1149v39M1529 1149v39M1569 1129v59M1607 1149v39M1645 1149v39M1683 1149v39M1721 1149v39M1761 1149v39M1799 1149v39M1837 1149v39M1875 1149v39M1913 1149v39M1951 1129v59M1991 1149v39M2029 1149v39M2067 1149v39M2105 1149v39M2143 1149v39M2183 1149v39"/>
        <path id="rows" stroke="#808080" stroke-width="2" d="M1068 402h40M1068 440h40M1068 478h40M1068 516h40M1068 554h40M1068 592h40M1068 632h40M1068 670h40M1068 708h40M1068 746h40M1068 784h40M1068 824h40M1068 862h40M1068 900h40M1068 938h40M1068 976h40M1068 1014h40M1068 1054h40M1068 1092h40M1068 1130h40M1068 1168h40"/>
        <use href="#rows" x="1110"/>
        <path id="dots" stroke="#000" stroke-width="2" d="M1146 440h2m36 0h2m36 0h2m36 0h2m36 0h2m38 0h2m36 0h2m36 0h2m36 0h2m36 0h2m36 0h2m38 0h2m36 0h2m36 0h2m36 0h2m36 0h2m38 0h2m36 0h2m36 0h2m36 0h2m36 0h2m36 0h2m38 0h2m36 0h2m36 0h2m36 0h2m36 0h2"/>
        <use href="#dots" y="38"/><use href="#dots" y="76"/><use href="#dots" y="114"/><use href="#dots" y="152"/><use href="#dots" y="192"/><use href="#dots" y="230"/><use href="#dots" y="268"/><use href="#dots" y="306"/><use href="#dots" y="344"/><use href="#dots" y="384"/><use href="#dots" y="422"/><use href="#dots" y="460"/><use href="#dots" y="498"/><use href="#dots" y="536"/><use href="#dots" y="574"/><use href="#dots" y="614"/><use href="#dots" y="652"/><use href="#dots" y="690"/>
        <path stroke="#f00" stroke-width="2" stroke-dasharray="6 6" d="M1185 425v704M1106 1072h1072"/>
        <g fill="none" stroke="#000080" stroke-width="2"><path d="M1339 766h612v306h-612zM1339 814h-154v58h154M1185 842h154M1339 966h-154v58h154M1185 996h154M1951 814h154v58h-154M1951 842h154"/></g>
        <path fill="none" stroke="#800000" stroke-width="2" d="M1175 832h20v20h-20zM1175 986h20v20h-20zM2095 832h20v20h-20z"/>
        <g class="pins"><text class="big" x="1344" y="711" textLength="598">busmerge</text><text x="1357" y="859" textLength="215">da(47:0)</text><text x="1716" y="859" textLength="216">q(111:0)</text><text x="1357" y="1011" textLength="217">db(63:0)</text></g>
      </svg>
    </div>
    <div class="tabs etabs">
      <div class="tab first"><span>What's New in ISE Design Suite 10.1</span></div>
      <div class="tab"><svg class="ic"><use href="#sig"/></svg><span>Design Summary</span></div>
      <div class="tab"><svg class="ic"><use href="#vdoc"/></svg><span>busmerge.v</span></div>
      <div class="tab"><svg class="ic"><use href="#sdoc"/></svg><span>detect7B.sch</span></div>
      <div class="tab on"><svg class="ic"><use href="#gate"/></svg><span>busmerge.sym</span></div>
    </div>
  </section>
</main>

<section class="transcript">
  <div class="side"><svg class="x"><use href="#close"/></svg><span>Transcript</span></div>
  <div class="console">
    <div class="out">
      <div class="gutter"></div>
      <pre>Started : "Launching ISE Text Editor to edit busmerge.v".

Started : "Launching Schematic Editor to edit detect7B.sch".</pre>
      <div class="vs"><svg class="sb"><use href="#up"/></svg><i class="thumb"></i><svg class="sb last"><use href="#dn"/></svg></div>
      <div class="hs"><svg class="sb"><use href="#lf"/></svg><i class="thumb ridged"></i><svg class="sb last"><use href="#rt"/></svg></div>
    </div>
    <div class="tabs ctabs">
      <div class="tab on"><svg class="ic"><use href="#con"/></svg><span>Console</span></div>
      <div class="tab"><svg class="ic"><use href="#err"/></svg><span>Errors</span></div>
      <div class="tab"><svg class="ic"><use href="#warn"/></svg><span>Warnings</span></div>
      <div class="tab"><svg class="ic"><use href="#tcl"/></svg><span>Tcl Shell</span></div>
      <div class="tab"><svg class="ic"><use href="#fbin"/></svg><span>Find in Files</span></div>
    </div>
  </div>
</section>
<div class="status"><span>[428,76]</span><i></i></div>

<footer class="taskbar">
  <div class="start"><svg><use href="#flag"/></svg><b>start</b></div>
  <div class="task active"><svg class="ic"><use href="#ise"/></svg><span>Xilinx - ISE - E:\Docu...</span></div>
  <div class="task"><svg class="ic"><use href="#fold"/></svg><span>EE533_Lab3</span></div>
  <div class="task"><svg class="ic"><use href="#fold"/></svg><span>lab 3</span></div>
  <div class="tray"><svg class="ic"><use href="#shield"/></svg><svg class="ic"><use href="#spk"/></svg><svg class="ic"><use href="#v2"/></svg><span>6:31 PM</span></div>
</footer>
<footer class="host-status">
  <svg class="ic"><use href="#h1"/></svg><svg class="ic"><use href="#h2"/></svg><svg class="ic"><use href="#h3"/></svg><svg class="ic"><use href="#h4"/></svg><svg class="ic"><use href="#h5"/></svg><svg class="ic"><use href="#h6"/></svg><svg class="ic"><use href="#h7"/></svg><svg class="ic"><use href="#h8"/></svg><svg class="ic"><use href="#h9"/></svg><svg class="ic"><use href="#h10"/></svg><svg class="ic"><use href="#h11"/></svg><svg class="ic"><use href="#h12"/></svg>
  <span>Right Ctrl</span>
</footer>
</body>
</html>
```
FILE: styles.css
```css
* { box-sizing: border-box; }
body, h1, ul, p, pre { margin: 0; padding: 0; }
ul { list-style: none; }
body {
  width: 2880px; height: 1704px; overflow: hidden;
  display: flex; flex-direction: column;
  background: #ece9d8; color: #000;
  font: 22px/32px "Liberation Sans", Arial, sans-serif;
  letter-spacing: -.6px; white-space: nowrap;
}
svg { display: block; flex: none; }
.defs { position: absolute; width: 0; height: 0; }
.ic { width: 32px; height: 32px; }

/* host window */
.host-title { height: 45px; background: #f3f3f3; display: flex; align-items: center; padding: 0 33px 0 2px; color: #8c8c8c; font: 23px/45px "Open Sans", "Noto Sans CJK SC", sans-serif; letter-spacing: .05px; }
.host-logo { width: 32px; height: 32px; margin-right: 6px; }
.host-name { padding-top: 1px; }
.host-ctl { width: 210px; height: 24px; margin-left: auto; margin-bottom: 3px; }
.host-menu { height: 44px; background: #fff; display: flex; gap: 32px; padding-left: 16px; color: #9a9a9a; font: 24px/40px "Noto Sans CJK SC", sans-serif; letter-spacing: 0; }

/* application title */
.xp-title {
  height: 52px; display: flex; align-items: center; padding: 0 4px 4px 4px;
  background: linear-gradient(#3c96fc 0, #1e80fa 7%, #0863f0 12%, #0052e4 24%, #0054e8 45%, #005cf6 65%, #006aff 80%, #0066fa 90%, #0048d0 95%, #0040c4 100%);
}
.xp-title h1 { margin-left: 6px; padding-top: 3px; color: #fff; font: 700 25px/45px "Noto Sans", sans-serif; letter-spacing: .32px; text-shadow: 2px 2px 0 #0a2a8c; }
.xp-ctl { margin-left: auto; display: flex; gap: 4px; }
.xp-ctl svg { width: 42px; height: 42px; border: 2px solid #fff; border-radius: 6px; background: radial-gradient(circle at 60% 35%, #2c50f0, #3870f0 55%, #1848c8); }
.xp-ctl svg.red { background: linear-gradient(135deg, #f0a08c, #e04820 50%, #c03010); }

/* menu bar */
.menubar { height: 42px; border-bottom: 2px solid #aca899; display: flex; align-items: center; font: 22px/36px "DejaVu Sans Condensed", "DejaVu Sans", sans-serif; font-stretch: condensed; letter-spacing: -.7px; }
.menubar > .ic { width: 28px; height: 30px; margin-top: -2px; }
.menus { display: grid; grid-template-columns: 52px 57px 63px 89px 85px 95px 58px 70px 94px 60px; margin-left: 13px; height: 38px; }
.mdi-ctl { margin-left: auto; display: flex; gap: 4px; padding-bottom: 4px; }
.mdi-ctl svg { width: 28px; height: 25px; border: 3px solid #003c74; border-radius: 4px; background: linear-gradient(#fff, #e4e2d8); }
.mdi-ctl svg:last-child { margin-left: 4px; }

/* tool bars */
.tools { height: 94px; }
.bar { display: grid; align-items: center; height: 44px; margin-bottom: 4px; padding-left: 6px; }
.one { grid-template-columns: 20px 44px 44px 44px 44px 16px 48px 20px 44px 44px 44px 44px 16px 44px 44px 16px 44px 20px 44px 44px 44px 44px 44px 44px 12px 52px 20px 46px 46px 44px 48px 22px 46px 48px 22px 46px 40px 278px 22px 50px 20px 46px 44px 46px 44px 48px 20px 44px 44px 44px 18px 44px 44px 44px 44px 44px 46px 22px 46px 32px; }
.two { grid-template-columns: 12px 46px 54px 16px 46px 46px 44px 46px 14px 46px 44px 46px 42px 46px 54px 30px 14px 50px 16px 44px 46px 44px 42px 46px 44px 44px 44px 14px 32px; }
.grip { width: 10px; height: 32px; margin-top: 4px; background: linear-gradient(90deg, transparent 4px, #ece9d8 4px 6px, transparent 6px), repeating-linear-gradient(#a09e90 0 4px, #fff 4px 6px, #ece9d8 6px 8px); }
.sep { width: 2px; height: 36px; background: #c8c5b2; }
.pressed { width: 44px; height: 44px; border: 2px solid #7c9cb8; border-radius: 6px; background: #fff; display: grid; place-items: center; padding-left: 2px; }
.combo { display: flex; align-items: center; border: 2px solid #7f9db9; background: #fff; padding: 2px; }
.drop { margin-left: auto; height: 100%; width: 28px; background: linear-gradient(135deg, #d8e4ff, #b0c8fa); border-radius: 2px; }
.find { width: 270px; height: 36px; }

/* scroll bars */
.vs, .hs { display: flex; background: #f6f5f0; }
.vs { flex-direction: column; align-items: center; background: linear-gradient(90deg, #efeee8, #fefefa); }
.hs { align-items: center; background: linear-gradient(#efeee8, #fefefa); }
.sb { width: 30px; height: 32px; background: linear-gradient(135deg, #dce6ff, #b4c8fa); border: 2px solid #fff; border-bottom-color: #8cacdc; border-radius: 4px; }
.thumb { background: #c4d3fc; border: 2px solid #fff; border-bottom-color: #7c9cd4; border-right-color: #a4bce8; border-radius: 4px; display: grid; place-items: center; }
.vs .last { margin-top: auto; }
.hs .last { margin-left: auto; }
.ridged::after { content: ""; width: 16px; height: 12px; background: repeating-linear-gradient(90deg, #eef4fe 0 2px, #8cb0f8 2px 4px); }
.vs .ridged::after { width: 12px; height: 16px; background: repeating-linear-gradient(#eef4fe 0 2px, #8cb0f8 2px 4px); }

/* tabs */
.tabs { display: flex; }
.tab { display: flex; align-items: center; overflow: hidden; background: linear-gradient(#efeee8, #fafaf8 80%, #fff); border: 2px solid #91a7b4; border-top: 0; border-radius: 0 0 6px 6px; }
.tab.on { background: #fcfcfe; border-color: #919b9c; border-bottom: 5px solid #f8b030; }

/* left dock */
.work { height: 1056px; display: flex; }
.dock { width: 408px; padding: 2px 8px 0 2px; }
.dock-head { display: flex; align-items: center; justify-content: space-between; background: #0054e3; color: #fff; padding: 0 10px 0 9px; }
.x { width: 20px; height: 20px; }
.sources-head { height: 34px; letter-spacing: -.5px; }
.sources { margin-top: 2px; height: 608px; border: 2px solid #919b9c; border-bottom: 0; padding: 17px 16px 0; }
.cat { height: 33px; line-height: 33px; }
.list { width: 362px; border: 2px solid #7f9db9; background: #fff; display: grid; grid-template-columns: 324px 34px; overflow: hidden; }
.list ul { overflow: hidden; }
.list li { padding-left: 2px; height: 32px; letter-spacing: -.5px; }
.list li.all { letter-spacing: -1.1px; }
.list li.path { letter-spacing: -.22px; }
.list li.arith { padding-left: 1px; height: 26px; line-height: 31px; }
.list .sel { background: #ece9d8; }
.list .half { width: 206px; }
.cats { height: 128px; grid-template-rows: 90px 34px; }
.list .vs { padding-top: 1px; }
.list .thumb { width: 30px; height: 18px; }
.cats .hs .thumb { width: 162px; height: 30px; margin-left: 4px; }
.cats .sb { width: 31px; }
.cats .hs .last { margin-right: 34px; }
.cats .hs { grid-column: 1 / 3; }
.strip { height: 10px; background: #fafafa; }
.syms { height: 136px; }
.filt { margin-top: 20px; height: 30px; line-height: 28px; letter-spacing: -.55px; }
.field { height: 36px; border: 2px solid #7f9db9; background: #fff; }
.ori { margin-top: 18px; height: 32px; line-height: 32px; }
.sy { letter-spacing: -.5px; padding-left: 2px; }
.orient { height: 36px; padding-left: 9px; line-height: 28px; letter-spacing: -.6px; }
.info { display: block; width: 358px; height: 42px; margin: 18px 2px 0; border: 2px solid #003c74; border-radius: 6px; background: linear-gradient(#fff, #ecebe4); font: inherit; line-height: 37px; letter-spacing: -.5px; padding: 0; color: #000; }
.stabs { height: 66px; padding-left: 2px; gap: 2px; letter-spacing: -.3px; }
.stabs .tab { height: 47px; padding: 4px 4px 0; }
.stabs .tab .ic { margin-right: 6px; width: 30px; }
.stabs .tab:nth-child(1) { width: 74px; }
.stabs .tab:nth-child(2) { width: 72px; }
.stabs .tab:nth-child(3) { width: 84px; }
.stabs .tab:nth-child(4) { width: 74px; margin-right: -2px; }
.stabs .tab.on { height: 54px; width: 84px; padding-top: 0; }
.stabs .tab span { overflow: hidden; }
.proc-head { height: 34px; letter-spacing: -.6px; }
.proc { margin-top: 2px; height: 228px; display: flex; border: 2px solid #919b9c; outline: 2px solid #7f9db9; outline-offset: -4px; padding: 2px; overflow: hidden; }
.proc-body { width: 358px; padding: 16px 0 0 16px; }
.selopt { width: 324px; height: 32px; border: 2px solid #7f9db9; background: #fcfcfe; line-height: 28px; text-align: center; letter-spacing: -.35px; }
.group { width: 324px; height: 180px; margin-top: 16px; border: 2px solid #7f9db9; background: #fcfcfe; padding: 17px 0 0 14px; letter-spacing: -.25px; }
.group p { line-height: 29px; }
.radio { display: flex; align-items: center; gap: 12px; height: 28px; margin-top: 10px; letter-spacing: -.2px; }
.radio svg { width: 27px; height: 27px; }
.radio span { padding-top: 4px; }
.radio.second { margin-top: 20px; }
.proc .vs { width: 32px; }
.proc .sb { width: 30px; height: 32px; }
.proc .thumb { width: 30px; height: 126px; margin-top: 1px; }
.ptabs { padding-left: 2px; margin-top: 1px; }
.ptabs .tab { width: 180px; height: 47px; padding-left: 18px; letter-spacing: -.35px; }
.ptabs .tab .ic { margin-right: 6px; margin-top: 6px; }
.ptabs .tab.on { width: 159px; height: 54px; margin-left: 1px; padding-left: 14px; }
.ptabs .tab.on .ic { margin: 0 12px 0 0; }

/* editor */
.editor { width: 2472px; }
.frame { height: 994px; border-top: 2px solid #aca899; border-left: 2px solid #aca899; padding: 0 4px 4px 0; background: linear-gradient(#716f64, #716f64) 0 0 / 100% 2px no-repeat, linear-gradient(#716f64, #716f64) 0 0 / 2px 100% no-repeat; border-bottom: 2px solid #fff; }
.sheet { width: calc(100% - 2px); height: 984px; margin: 4px 0 0 2px; border: 2px solid #7f9db9; background: #fff; padding: 74px 652px; }
.pins { fill: #000080; stroke: #000080; stroke-width: .6px; font-family: "Liberation Sans", Arial, sans-serif; font-size: 58px; letter-spacing: 0; }
.big { font-size: 132px; stroke-width: 2px; }
.etabs { margin-left: 2px; letter-spacing: -.75px; }
.etabs .tab { height: 49px; padding-top: 5px; }
.etabs .tab:nth-child(1) { width: 394px; height: 45px; padding-left: 14px; margin-right: 3px; letter-spacing: -.25px; }
.etabs .tab:nth-child(2) { width: 240px; padding-left: 18px; margin-right: 2px; }
.etabs .tab:nth-child(3) { width: 191px; padding-left: 18px; margin-right: 3px; }
.etabs .tab:nth-child(4) { width: 208px; padding-left: 16px; }
.etabs .tab.on { width: 222px; height: 54px; padding-left: 14px; padding-top: 2px; }
.etabs .ic { margin-right: 6px; }
.etabs .tab:nth-child(4) .ic { margin-right: 8px; }
.etabs .tab.on .ic { margin-right: 12px; }

/* transcript */
.transcript { height: 226px; display: flex; padding: 0 2px; gap: 2px; }
.side { width: 34px; background: #0054e3; color: #fff; display: flex; flex-direction: column; align-items: center; justify-content: space-between; padding: 10px 0 11px; font-size: 20px; letter-spacing: .4px; }
.side span { writing-mode: vertical-rl; transform: rotate(180deg); line-height: 32px; }
.console { flex: 1; }
.out { height: 172px; border: 2px solid #919b9c; border-bottom: 0; background: #fff; display: grid; grid-template: 134px 36px / 32px 1fr 34px; }
.gutter { background: #ece9d8; }
.out pre { font: 26px/32px "Liberation Mono", "Courier New", monospace; letter-spacing: .4px; padding: 1px 0 0 2px; }
.out .vs .thumb { width: 30px; height: 38px; margin-top: 35px; }
.out .vs .last { margin-top: 0; }
.out .hs { grid-column: 1 / 3; padding-top: 2px; }
.out .hs .thumb { width: 641px; height: 34px; margin-left: 4px; }
.ctabs { letter-spacing: -.7px; }
.ctabs .tab { height: 48px; padding-top: 4px; }
.ctabs .tab.on { width: 163px; height: 53px; padding-left: 16px; padding-top: 2px; }
.ctabs .tab:nth-child(2) { width: 134px; padding-left: 17px; margin-right: 4px; letter-spacing: -.9px; }
.ctabs .tab:nth-child(3) { width: 170px; padding-left: 17px; margin-right: 4px; letter-spacing: -.5px; }
.ctabs .tab:nth-child(4) { width: 162px; padding-left: 17px; margin-right: 4px; letter-spacing: -.2px; }
.ctabs .tab:nth-child(5) { width: 192px; padding-left: 17px; }
.ctabs .ic { margin-right: 6px; margin-top: 4px; }
.ctabs .on .ic { margin: 0 10px 0 0; }
.status { height: 44px; display: flex; justify-content: flex-end; gap: 4px; padding: 8px 6px 4px 0; font-family: "DejaVu Sans Condensed", "DejaVu Sans", sans-serif; font-stretch: condensed; }
.status span { width: 102px; height: 32px; border: 2px solid; border-color: #aca899 #fff #fff #aca899; text-align: center; line-height: 30px; letter-spacing: .1px; }
.status i { width: 4px; border-right: 2px solid #fff; border-left: 2px solid #d0cdbc; }

/* task bar */
.taskbar { height: 60px; display: flex; align-items: center; color: #fff; font-family: "DejaVu Sans Condensed", "DejaVu Sans", sans-serif; font-stretch: condensed; letter-spacing: -.1px; background: linear-gradient(#2c60d0 0, #3f8cf3 8%, #2460e0 18%, #2157d7 40%, #2660e0 85%, #1941a5 100%); }
.start { width: 193px; height: 60px; display: flex; align-items: center; gap: 10px; padding-left: 20px; border-radius: 0 14px 14px 0; background: linear-gradient(#2c7c30 0, #68ac68 8%, #3c943c 25%, #349034 60%, #3ca43c 85%, #206c20 100%); margin-right: 20px; }
.start svg { width: 38px; height: 38px; }
.start b { font: italic 700 33px/50px "Open Sans", sans-serif; letter-spacing: -.3px; text-shadow: 2px 2px 2px #1c4c1c; padding-bottom: 4px; }
.task { width: 317px; height: 50px; margin-right: 3px; border-radius: 5px; background: linear-gradient(#5a9cff, #3c80f4 15%, #3a7cf0 80%, #2c64d8); display: flex; align-items: center; gap: 8px; padding-left: 18px; }
.task.active { width: 319px; margin-right: 1px; background: linear-gradient(#143c94, #1a4cb4 15%, #1c50bc); padding-left: 20px; gap: 7px; }
.task.active span { letter-spacing: .05px; padding-top: 3px; }
.tray { margin-left: auto; width: 258px; height: 60px; border-left: 3px solid #103c8c; box-shadow: inset 3px 0 #20c0f4; background: linear-gradient(#0c60c8 0, #1cb4f4 7%, #1290e8 20%, #1090e8 60%, #10a0f0 88%, #0c58c0 100%); display: flex; align-items: center; padding-left: 19px; gap: 5px; }
.tray span { margin-left: 13px; letter-spacing: -.35px; }

.host-status { height: 41px; background: #f0f0f0; display: flex; align-items: center; gap: 6px; padding-left: 2311px; }
.host-status span { font: 25px/38px "Open Sans", sans-serif; letter-spacing: .2px; }
```
